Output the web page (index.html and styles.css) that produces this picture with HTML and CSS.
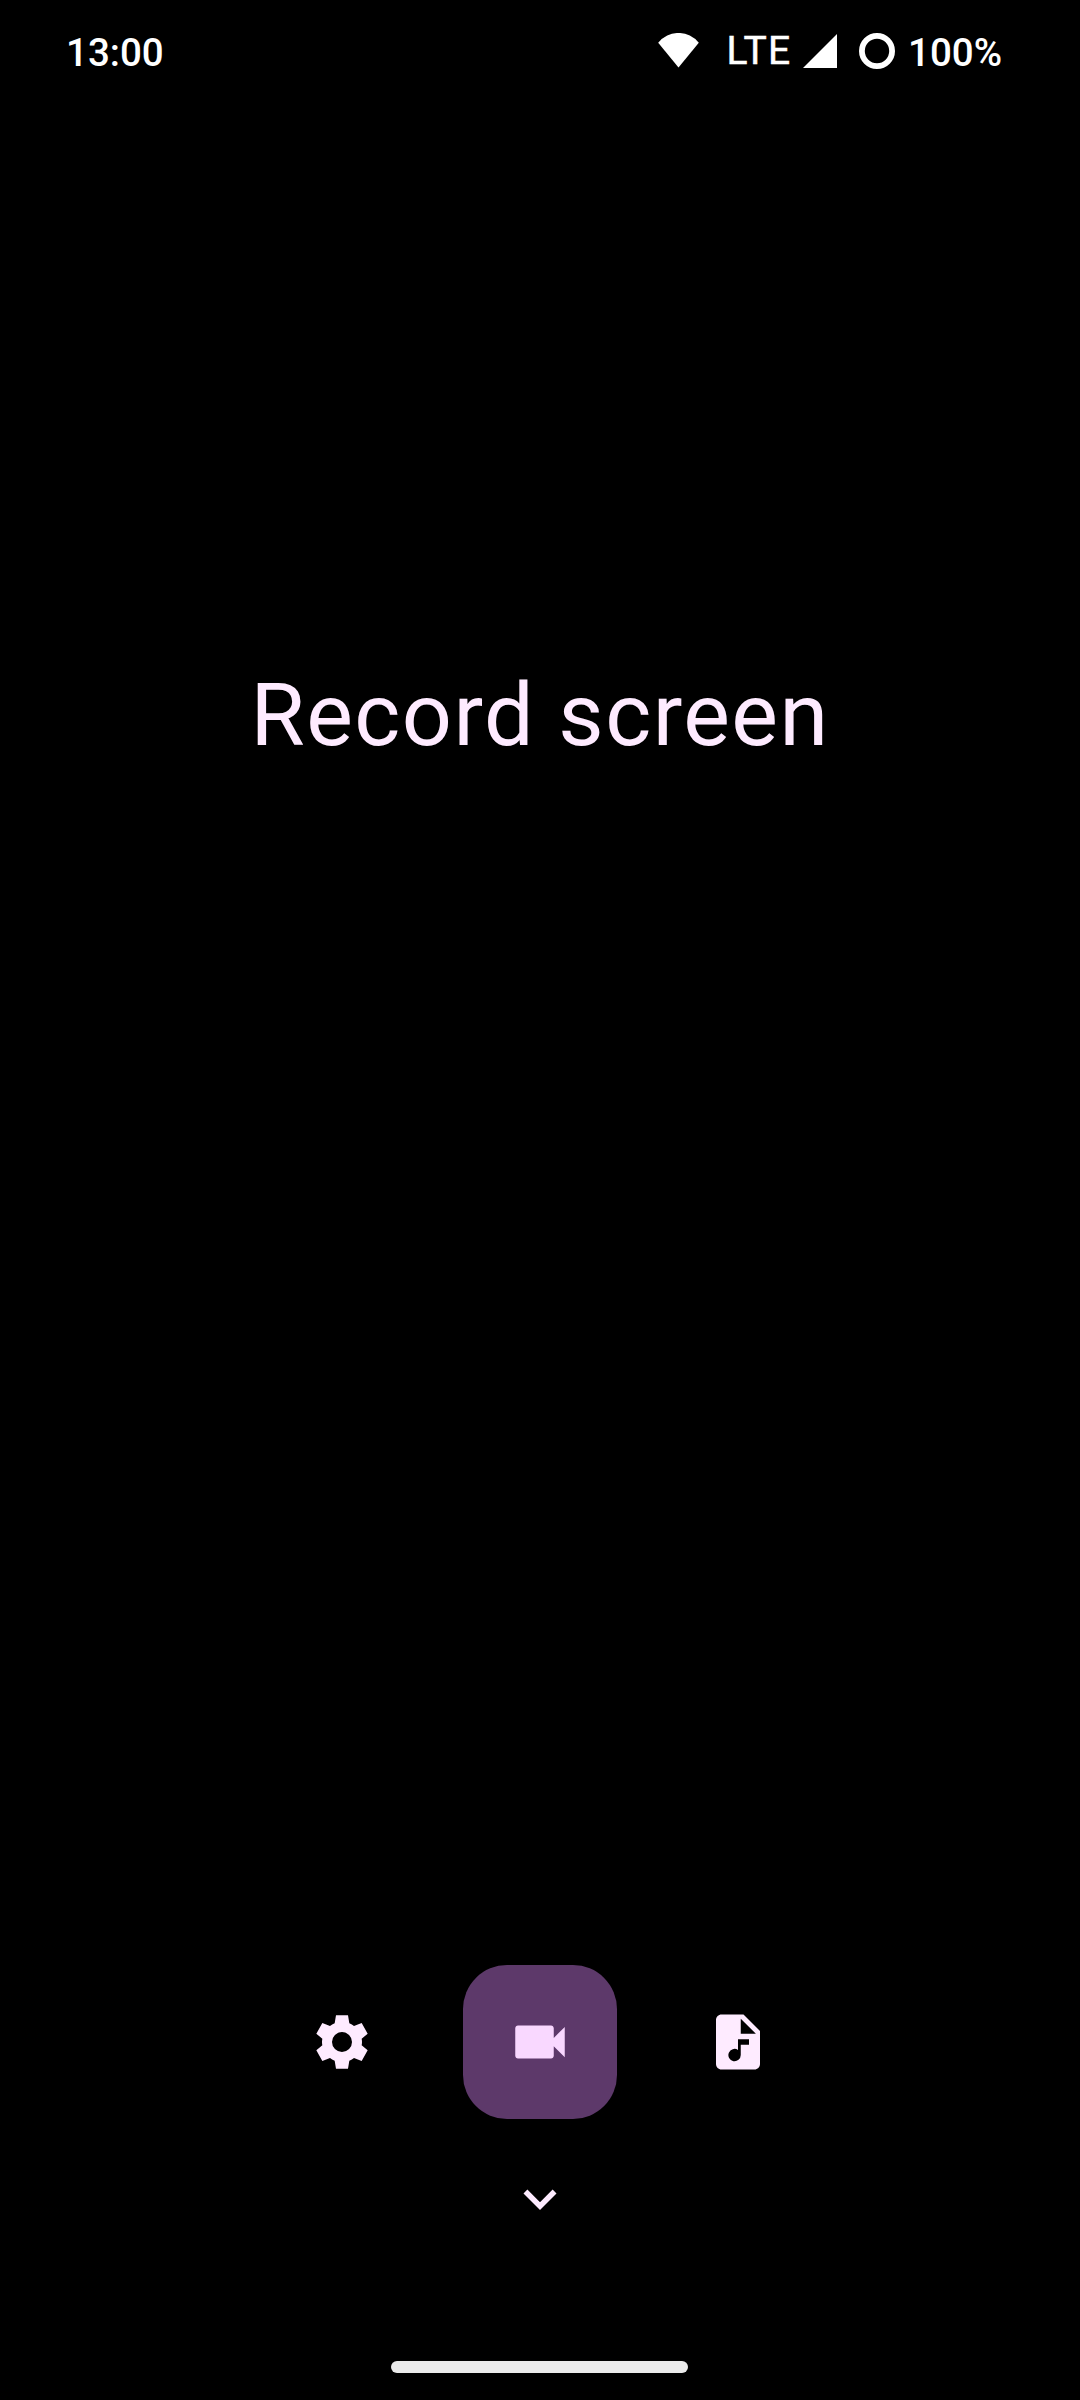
FILE: index.html
```html
<!DOCTYPE html>
<html lang="en">
<head>
<meta charset="utf-8">
<title>Record screen</title>
<link rel="stylesheet" href="styles.css">
</head>
<body>
<header class="status">
  <span class="clock">13:00</span>
  <div class="indicators">
    <svg class="wifi" width="41" height="35" viewBox="0 0 41 35"><path d="M20.500 34.500.2 9.700A26 26 0 0 1 40.800 9.700z"/></svg>
    <span class="network">LTE</span>
    <svg class="signal" width="34" height="34" viewBox="0 0 34 34"><path d="M34 0v34H0z"/></svg>
    <svg class="battery" width="36" height="36" viewBox="0 0 36 36"><circle cx="18" cy="18" r="15.100"/></svg>
    <span class="percent">100%</span>
  </div>
</header>
<main class="content"><h1 class="title">Record screen</h1></main>
<nav class="actions">
  <button class="action" aria-label="Settings"><svg class="icon" viewBox="0 0 198 198"><path fill-rule="evenodd" d="M81 19h36l4 24q8 3 14 8l23-9 18 32-18 15q2 10 0 20l18 15-18 32-23-9q-6 5-14 8l-4 24H81l-4-24q-8-3-14-8l-23 9-18-32 18-15q-2-10 0-20L22 74l18-32 23 9q6-5 14-8zM99 69a30 30 0 1 0 0 60 30 30 0 0 0 0-60z"/></svg></button>
  <button class="action record" aria-label="Record"><svg class="icon" viewBox="0 0 24 24"><path d="M17 10.500V7c0-.55-.45-1-1-1H4c-.55 0-1 .45-1 1v10c0 .55.45 1 1 1h12c.55 0 1-.45 1-1v-3.500l4 4v-11z"/></svg></button>
  <button class="action" aria-label="Audio"><svg class="icon" viewBox="0 0 24 24"><path d="M14 2H6c-1.100 0-2 .9-2 2v16c0 1.100.9 2 2 2h12c1.100 0 2-.9 2-2V8zm2 11h-3v3.750a2.250 2.250 0 1 1-1-1.870V11h4zm-3-4V3.500L18.500 9z"/></svg></button>
</nav>
<button class="more" aria-label="More"><svg class="icon" viewBox="0 0 24 24"><path d="M7.410 8.590 12 13.170l4.590-4.580L18 10l-6 6-6-6z"/></svg></button>
<footer class="home"></footer>
</body>
</html>
```
FILE: styles.css
```css
* { box-sizing: border-box; }
body { margin: 0; height: 2400px; display: flex; flex-direction: column; align-items: center; background: #000; color: #fff; font-family: Roboto, sans-serif; }
button { border: 0; padding: 0; background: none; color: #feebff; }
svg { display: block; fill: currentColor; flex: none; }
.status { width: 100%; height: 104px; padding: 30px 78px 0 66px; display: flex; justify-content: space-between; align-items: flex-start; font-size: 38.5px; font-weight: 500; line-height: 46px; }
.indicators { display: flex; align-items: flex-start; }
.wifi { margin-top: 3px; }
.network { margin: -2px 11.600px 0 27.500px; font-size: 39px; font-weight: 400; letter-spacing: 1.200px; -webkit-text-stroke: .5px currentColor; }
.signal { margin-top: 3.500px; }
.battery { margin: 3px 13px 0 22px; fill: none; stroke: currentColor; stroke-width: 5.800; }
.content { height: 1861px; padding-top: 559px; }
.title { margin: 0; font-size: 88px; font-weight: 400; line-height: 104px; letter-spacing: 1.450px; color: #feebff; white-space: nowrap; }
.actions { display: flex; gap: 44px; }
.action { width: 154px; height: 154px; display: grid; place-items: center; }
.record { border-radius: 44px; background: #5d396a; color: #f9d8ff; }
.icon { width: 66px; height: 66px; }
.more { margin-top: 47px; }
.home { width: 297px; height: 11.500px; margin: 129.250px 1px 0 0; border-radius: 6px; background: #ebebeb; }
```
